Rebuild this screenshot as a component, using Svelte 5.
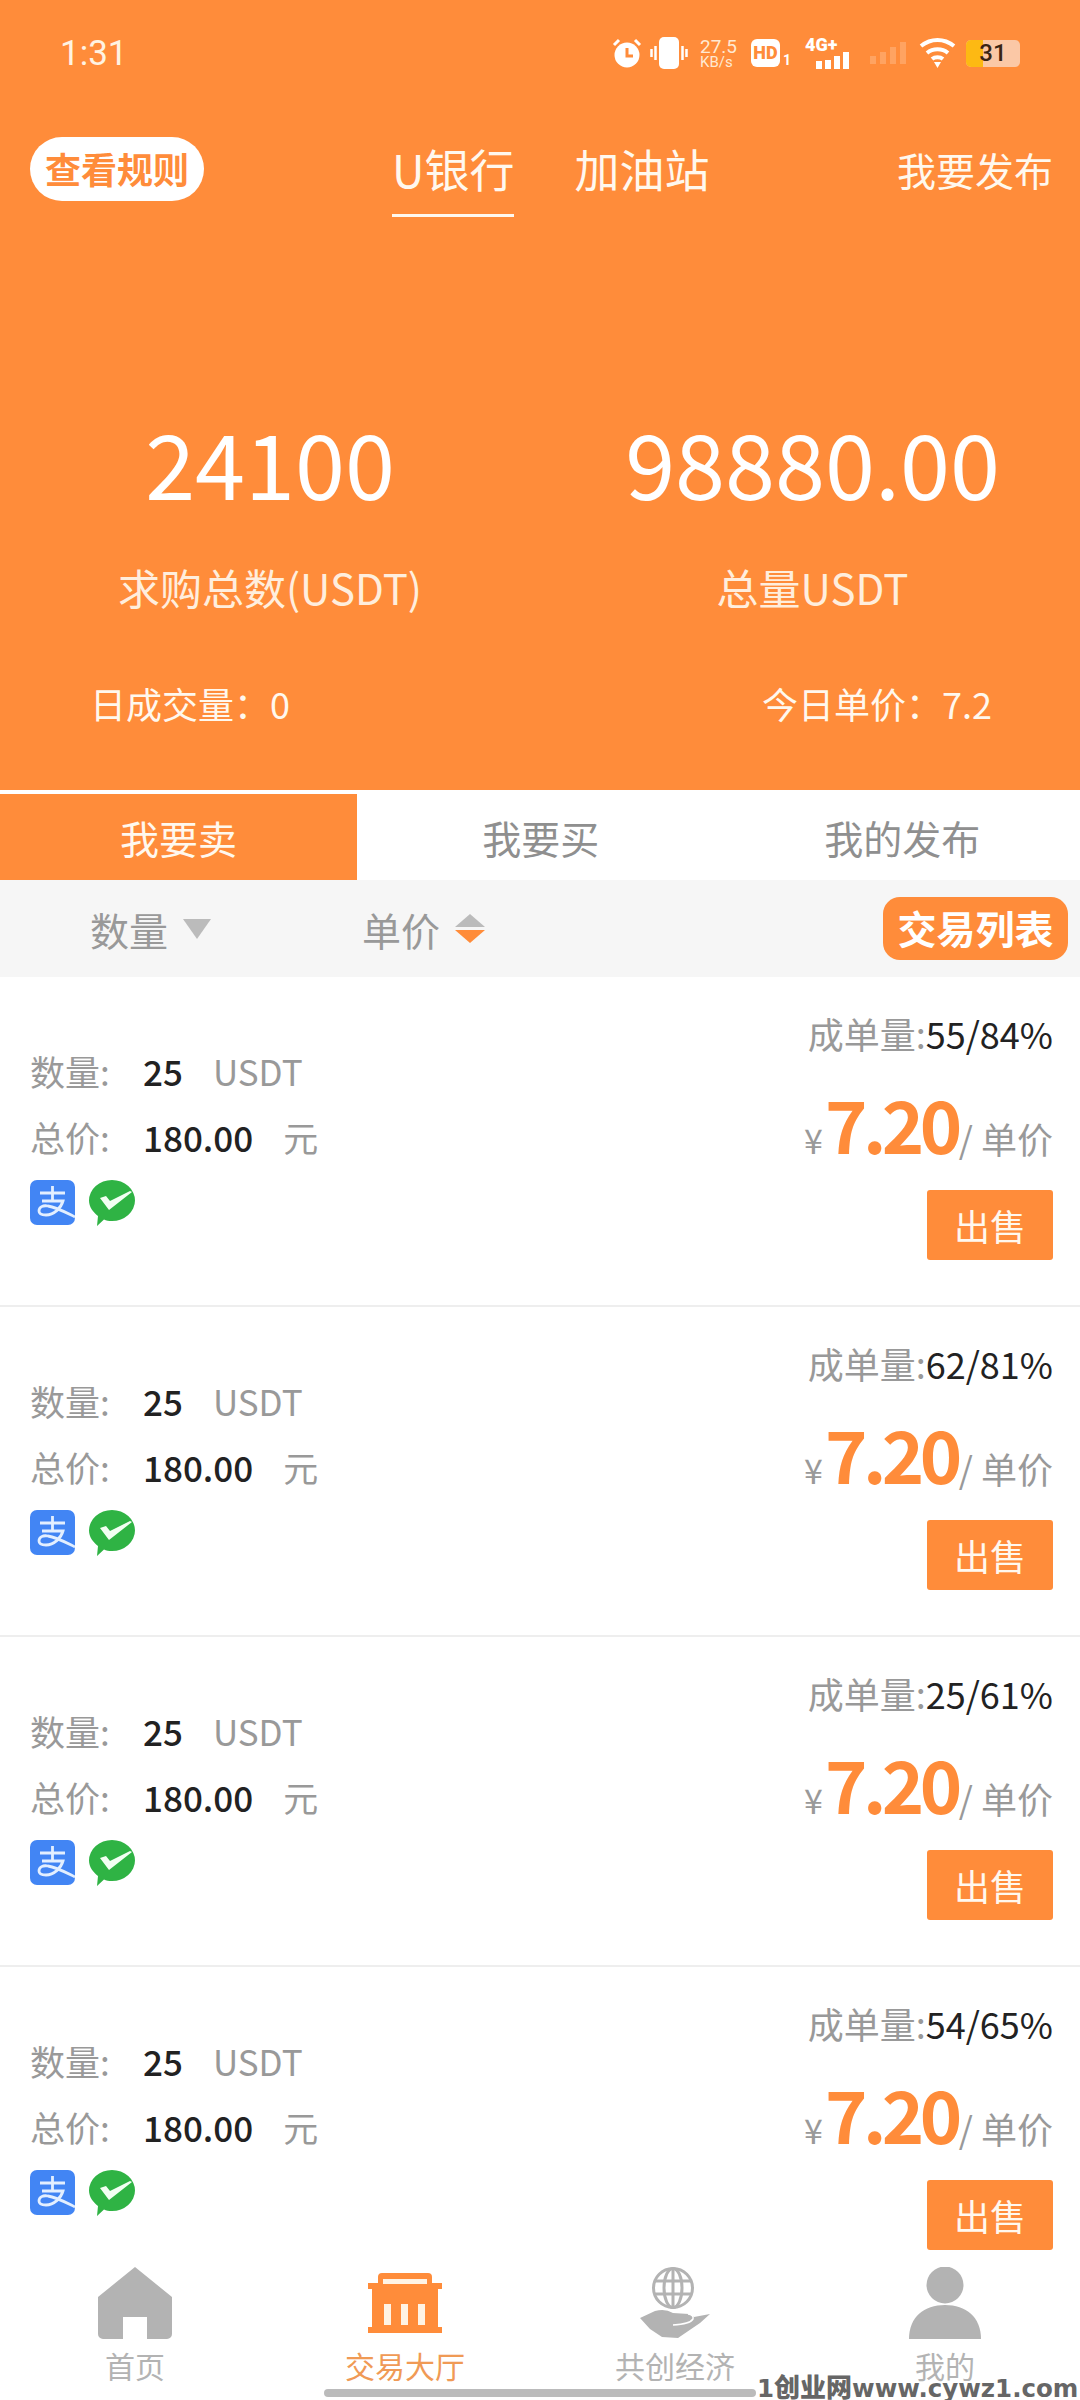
<script>
  const rows = ['55/84%', '62/81%', '25/61%', '54/65%'];
</script>

<div class="page">
  <header class="hero">
    <div class="status">
      <span class="time">1:31</span>
      <div class="sicons">
        <svg class="ic" width="30" height="30" viewBox="0 0 30 30"><circle cx="15" cy="17" r="12.5" fill="#fff"/><path d="M2 7l5-5M28 7l-5-5" stroke="#fff" stroke-width="3" fill="none"/><path d="M15 10v8h6" stroke="#ff8c3a" stroke-width="3" fill="none"/></svg>
        <svg class="ic vib" width="38" height="32" viewBox="0 0 38 32"><rect x="9" y="0" width="20" height="32" rx="5" fill="#fff"/><path d="M5.500 9v14M1.500 12v8M32.500 9v14M36.500 12v8" stroke="#fff" stroke-width="2.500"/></svg>
        <div class="speed"><span>27.5</span><span class="kb">KB/s</span></div>
        <div class="hd"><span class="hdbox">HD</span><span class="hdn">1</span></div>
        <div class="net">
          <span class="g">4G+</span>
          <svg width="36" height="17" viewBox="0 0 36 17"><path d="M3 9h6v8H3zM12 8h6v9h-6zM21 4h6v13h-6zM30 0h6v17h-6z" fill="#fff"/></svg>
        </div>
        <svg class="ic faint" width="37" height="22" viewBox="0 0 37 22"><path d="M1 14h6v8H1zM11 10h6v12h-6zM21 5h6v17h-6zM31 0h6v22h-6z" fill="#fff" opacity=".2"/></svg>
        <svg class="ic wifi" width="37" height="30" viewBox="0 0 37 30"><path d="M2 8c10-8 23-8 33 0M8 15c6-5 15-5 21 0M13 21c3-2.500 8-2.500 11 0" stroke="#fff" stroke-width="4" fill="none"/><path d="M15 24h7l-3.500 6z" fill="#fff"/></svg>
        <div class="bat"><span class="fill"></span><span class="num">31</span></div>
      </div>
    </div>

    <nav class="topnav">
      <span class="rule">查看规则</span>
      <div class="hdtabs">
        <span class="hdtab on">U银行</span>
        <span class="hdtab">加油站</span>
      </div>
      <span class="publish">我要发布</span>
    </nav>

    <div class="stats">
      <div class="stat"><div class="big">24100</div><div class="cap">求购总数(USDT)</div></div>
      <div class="stat second"><div class="big">98880.00</div><div class="cap">总量USDT</div></div>
    </div>

    <div class="foot">
      <span>日成交量：0</span>
      <span>今日单价：7.2</span>
    </div>
  </header>

  <div class="tabs">
    <div class="tab active">我要卖</div>
    <div class="tab">我要买</div>
    <div class="tab">我的发布</div>
  </div>

  <div class="filter">
    <div class="f f1">数量<i class="tri down gray"></i></div>
    <div class="f f2">单价
      <span class="sort"><i class="tri up gray small"></i><i class="tri down org small"></i></span>
    </div>
    <div class="list-btn">交易列表</div>
  </div>

  <main class="list">
    {#each rows as rate}
      <article class="row">
        <div class="left">
          <div class="line"><span class="k">数量:</span><b>25</b><span class="u">USDT</span></div>
          <div class="line"><span class="k">总价:</span><b>180.00</b><span class="u">元</span></div>
          <div class="pay">
            <svg width="45" height="45" viewBox="0 0 45 45"><path d="M7 0h31a7 7 0 0 1 7 7v24L45 36v2a7 7 0 0 1-7 7H7a7 7 0 0 1-7-7V7a7 7 0 0 1 7-7z" fill="#4285f4"/><path d="M10 13h25M22.500 6v14M12 21h21c-2 7-9 14-17 14-5 0-7-2-7-4 0-4 4-6 9-5 8 1 17 6 27 11" stroke="#e3efff" stroke-width="2.800" fill="none"/></svg>
            <svg width="46" height="46" viewBox="0 0 46 46"><path d="M23 0a23 20.500 0 0 1 0 41c-3 0-6-.5-8-1.500L8 46l1-10C4 32 0 27 0 20.500A23 20.500 0 0 1 23 0z" fill="#2fb344"/><path d="M11 18l6-2 4 5L41 11l2 1-23 18z" fill="#f2fff2"/></svg>
          </div>
        </div>
        <div class="right">
          <div class="rate"><span class="k">成单量:</span>{rate}</div>
          <div class="price"><span class="yen">¥</span><span class="val">7.20</span><span class="per">/ 单价</span></div>
          <button class="sell">出售</button>
        </div>
      </article>
    {/each}
  </main>

  <footer class="bar">
    <div class="item">
      <svg width="74" height="72" viewBox="0 0 74 72"><path d="M37 0l37 30v37a5 5 0 0 1-5 5H49V50H25v22H5a5 5 0 0 1-5-5V30z" fill="#b3b3b3"/></svg>
      <span>首页</span>
    </div>
    <div class="item cur">
      <svg width="74" height="72" viewBox="0 0 74 62"><path d="M10 11V5a4 4 0 0 1 4-4h46a4 4 0 0 1 4 4v6h10v6h-4v38h4v6H0v-6h4V17H0v-6z" fill="#ff8c3a"/><path d="M15 7h44v5H15zM16 32h7v21h-7zM33 32h7v21h-7zM50 32h7v21h-7z" fill="#fff3e4"/></svg>
      <span>交易大厅</span>
    </div>
    <div class="item">
      <svg width="74" height="72" viewBox="0 0 74 72"><g stroke="#b3b3b3" stroke-width="3" fill="none"><circle cx="35" cy="21" r="19.500"/><ellipse cx="35" cy="21" rx="9" ry="19.500"/><path d="M35 1.500v39M16 14h38M16 27h38"/></g><path d="M2 51l15-7q10-3 18 2l16 1 5 3 16-3-10 9-22 15-16-1-12-8z" fill="#b3b3b3"/><path d="M35 58q17-1 20-6 1-4-5-5" stroke="#fff" stroke-width="1.500" fill="none"/></svg>
      <span>共创经济</span>
    </div>
    <div class="item">
      <svg width="74" height="72" viewBox="0 0 74 72"><circle cx="37" cy="18" r="18.500" fill="#b3b3b3"/><path d="M1 72C1 50 16 38 37 38s36 12 36 34z" fill="#b3b3b3"/></svg>
      <span>我的</span>
    </div>
    <div class="indicator"></div>
    <div class="mark">1<span class="cjk">创业网</span>www.cywz1.com</div>
  </footer>
</div>

<style>
  :global(body) { margin: 0; background: #fff; }
  .page {
    width: 1080px; height: 2400px; overflow: hidden;
    display: flex; flex-direction: column;
    font-family: "Noto Sans CJK SC", "Noto Sans", sans-serif;
    color: #999;
  }
  .hero { height: 790px; background: #ff8c3a; color: #fff8ee; flex: none; display: flex; flex-direction: column; }
  .status { height: 106px; display: flex; align-items: center; padding: 0 60px 0 60px; box-sizing: border-box; }
  .time { font: 400 35px Roboto, sans-serif; color: #fff3e2; }
  .sicons { margin-left: auto; display: flex; align-items: center; height: 30px; }
  .ic { display: block; flex: none; }
  .vib { margin-left: 8px; }
  .speed { margin-left: 12px; width: 38px; display: flex; flex-direction: column; font: 400 15px/14px Roboto, sans-serif; color: #ffe9d2; white-space: nowrap; }
  .speed span:first-child { font-size: 19px; line-height: 17px; }
  .hd { margin-left: 13px; width: 40px; display: flex; align-items: flex-end; }
  .hdbox { width: 31px; height: 28px; background: #fff; border-radius: 6px; color: #ff8c3a; font: 900 18px/28px Roboto, sans-serif; text-align: center; }
  .hdn { font: 700 14px/14px Roboto, sans-serif; color: #fff; margin-left: 3px; }
  .net { margin-left: 14px; width: 44px; display: flex; flex-direction: column; align-items: flex-end; }
  .net .g { font: 900 18px/15px Roboto, sans-serif; color: #fff; align-self: flex-start; white-space: nowrap; }
  .net svg { display: block; }
  .faint { margin-left: 20px; }
  .wifi { margin-left: 13px; }
  .bat { margin-left: 10px; position: relative; width: 54px; height: 27px; background: #fbc8a6; border-radius: 5px; overflow: hidden; text-align: center; }
  .bat .fill { position: absolute; left: 0; top: 0; bottom: 0; width: 17px; background: #fdb913; }
  .bat .num { position: relative; font: 500 24px/27px Roboto, sans-serif; color: #3a2412; }

  .topnav { height: 64px; margin-top: 31px; display: flex; align-items: center; padding: 0 28px 0 30px; }
  .rule { width: 174px; height: 64px; background: #fff; border-radius: 32px; color: #ff8c3a; font-size: 36px; font-weight: 700; line-height: 62px; text-align: center; }
  .hdtabs { display: flex; gap: 60px; margin-left: 188px; }
  .hdtab { font-size: 45px; line-height: 64px; position: relative; white-space: nowrap; }
  .hdtab.on::after { content: ""; position: absolute; left: 0; right: 0; top: 77px; height: 3px; background: #fff8ee; }
  .publish { margin-left: auto; font-size: 39px; margin-right: -1px; }

  .stats { display: grid; grid-template-columns: 1fr 1fr; padding-top: 210px; }
  .stat { display: flex; flex-direction: column; align-items: center; }
  .stat.second { padding-left: 5px; }
  .big { font-size: 90px; line-height: 100px; font-weight: 400; color: #fff; }
  .cap { font-size: 42px; line-height: 60px; margin-top: 46px; font-weight: 400; color: #ffeedd; }
  .foot { display: flex; justify-content: space-between; padding: 61px 88px 0 90px; font-size: 36px; line-height: 50px; font-weight: 400; }

  .tabs { margin-top: 4px; height: 86px; display: grid; grid-template-columns: 357px 1fr 1fr; flex: none; }
  .tab { font-size: 39px; line-height: 86px; text-align: center; color: #8f8f8f; padding-left: 6px; }
  .tab.active { background: #ff8c3a; color: #fff8ee; padding-left: 0; }
  .filter { height: 97px; background: #f6f6f6; display: flex; align-items: center; flex: none; font-size: 39px; color: #999; }
  .f { display: flex; align-items: center; }
  .f1 { margin-left: 90px; }
  .f2 { margin-left: 151px; }
  .tri { display: block; width: 0; height: 0; border-left: 14px solid transparent; border-right: 14px solid transparent; }
  .tri.down { border-top: 20px solid; margin-left: 15px; }
  .tri.up { border-bottom: 13px solid; }
  .tri.small { margin-left: 0; border-left-width: 15px; border-right-width: 15px; }
  .tri.down.small { border-top-width: 13px; margin-top: 3px; }
  .gray { color: #bbb; }
  .org { color: #ff8c3a; }
  .sort { margin-left: 15px; display: flex; flex-direction: column; }
  .list-btn { margin-left: auto; margin-right: 12px; width: 185px; height: 63px; border-radius: 17px; background: #ff8c3a; color: #fff; font-size: 39px; font-weight: 700; line-height: 61px; text-align: center; white-space: nowrap; }

  .list { flex: 1; overflow: hidden; min-height: 0; }
  .row { height: 330px; box-sizing: border-box; border-bottom: 2px solid #eee; display: flex; justify-content: space-between; padding: 0 27px 0 30px; }
  .left { padding-top: 70px; }
  .line { height: 66px; line-height: 48px; font-size: 35px; display: flex; }
  .line .k { width: 113px; }
  .line b { color: #222; font-weight: 500; font-size: 35px; }
  .line .u { margin-left: 30px; color: #999; }
  .pay { margin-top: 1px; display: flex; gap: 14px; }
  .pay svg { display: block; }
  .right { padding-top: 33px; display: flex; flex-direction: column; align-items: flex-end; }
  .rate { font-size: 36px; line-height: 46px; color: #222; font-weight: 400; }
  .rate .k { color: #999; }
  .price { height: 90px; margin-top: 22px; display: flex; align-items: baseline; line-height: 90px; color: #999; }
  .yen { font-size: 34px; margin-right: 2px; }
  .val { font-size: 72px; font-weight: 700; color: #ff8c3a; letter-spacing: -4.500px; margin-right: 1px; }
  .per { font-size: 36px; }
  .sell { margin-top: 22px; width: 126px; height: 70px; border: 0; padding: 0; border-radius: 3px; background: #ff8c3a; color: #fff8ee; font: 400 36px "Noto Sans CJK SC", sans-serif; }

  .bar { height: 145px; flex: none; background: #fff; display: grid; grid-template-columns: repeat(4, 270px); position: relative; }
  .item { display: flex; flex-direction: column; align-items: center; padding-top: 12px; color: #b3b3b3; font-size: 30px; line-height: 40px; }
  .item svg { display: block; margin-bottom: 6px; }
  .item.cur { color: #f09a55; }
  .indicator { position: absolute; left: 324px; width: 432px; top: 134px; height: 8px; border-radius: 4px; background: #bbb; }
  .mark { position: absolute; left: 757px; top: 117px; height: 28px; white-space: nowrap; font: 700 24.500px/28px "DejaVu Sans", "Noto Sans CJK SC", sans-serif; color: #666; }
  .cjk { font-size: 26px; line-height: 28px; font-family: "Noto Sans CJK SC", sans-serif; font-weight: 900; }
</style>
